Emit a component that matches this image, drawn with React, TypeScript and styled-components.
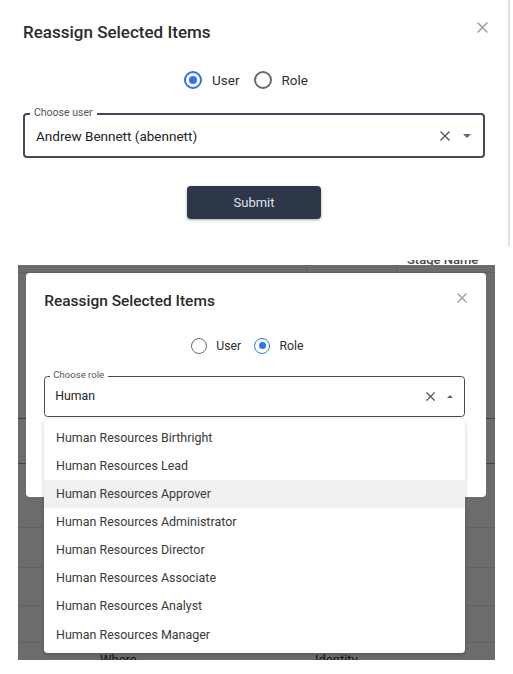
import React from 'react';
import styled, { createGlobalStyle } from 'styled-components';

const Global = createGlobalStyle`
  html, body { margin: 0; padding: 0; background: #ffffff; }
  body { font-family: Roboto, "Noto Sans", Arial, sans-serif; }
  * { box-sizing: border-box; }
`;

const ROLES = [
  'Human Resources Birthright',
  'Human Resources Lead',
  'Human Resources Approver',
  'Human Resources Administrator',
  'Human Resources Director',
  'Human Resources Associate',
  'Human Resources Analyst',
  'Human Resources Manager',
];

const Page = styled.div`
  width: 513px;
  height: 674px;
  overflow: hidden;
  display: flex;
  flex-direction: column;
  align-items: flex-start;
`;

const TopShot = styled.div`
  width: 510px;
  height: 247px;
  padding-left: 3px;
  border-right: 2px solid #e2e2e2;
  display: flex;
`;

const HeaderPeek = styled.div`
  margin-top: 13px;
  height: 5px;
  width: 100%;
  overflow: hidden;
  display: flex;
  align-items: flex-end;
  padding-left: 407px;
`;

const HeaderPeekText = styled.span`
  flex: none;
  font-size: 13px;
  line-height: 13px;
  margin-bottom: -1px;
  color: #4a4a4a;
  font-weight: 500;
`;

const Backdrop = styled.div`
  position: relative;
  margin-left: 18px;
  width: 477px;
  height: 395px;
  overflow: hidden;
  background: #f6f6f6;
`;

const BgTable = styled.div`
  display: flex;
  flex-direction: column;
`;

const BgRow = styled.div<{ $h: number; $blue?: boolean; $textTop?: number }>`
  height: ${(p) => p.$h}px;
  flex: none;
  border-bottom: 1px solid ${(p) => (p.$blue ? '#7f9ccc' : '#dcdcdc')};
  display: grid;
  grid-template-columns: 74px 215px 90px 1fr;
  padding-top: ${(p) => p.$textTop ?? 0}px;
  font-size: 13px;
  line-height: 15px;
  color: #333;
`;

const BgCell = styled.div<{ $divider?: boolean }>`
  border-right: ${(p) => (p.$divider ? '1px solid #d6d6d6' : 'none')};
  padding: 0 8px;
  white-space: nowrap;
  overflow: hidden;
`;

const BgLink = styled.span`
  color: #2a5db0;
`;

const Overlay = styled.div`
  position: absolute;
  inset: 0;
  background: rgba(0, 0, 0, 0.56);
`;

const DialogSpot = styled.div`
  position: absolute;
  left: 8px;
  top: 8px;
`;

const Zoomed = styled.div`
  zoom: 0.91;
`;

const DialogBox = styled.div`
  width: 505px;
  height: 246px;
  background: #ffffff;
  border-radius: 4px;
  display: flex;
  flex-direction: column;
  padding: 20px 23px 0 20px;
`;

const TitleRow = styled.div`
  display: flex;
  justify-content: space-between;
  align-items: flex-start;
  height: 24px;
`;

const Title = styled.h2`
  margin: 0;
  font-size: 17px;
  line-height: 24px;
  font-weight: 500;
  color: #2b2b2b;
`;

const CloseButton = styled.button`
  border: 0;
  background: none;
  padding: 0;
  margin: 2px -3px 0 0;
  width: 11px;
  height: 11px;
  display: flex;
  cursor: pointer;
`;

const RadioGroup = styled.div`
  margin-top: 24px;
  height: 24px;
  display: flex;
  justify-content: center;
  align-items: center;
  gap: 14px;
  padding-right: 16px;
`;

const RadioOption = styled.label`
  display: flex;
  align-items: center;
  gap: 10px;
  cursor: pointer;
`;

const RadioRing = styled.span<{ $checked: boolean }>`
  width: 18px;
  height: 18px;
  border-radius: 50%;
  border: 2px solid ${(p) => (p.$checked ? '#2f72ea' : '#6a6a6a')};
  display: flex;
  align-items: center;
  justify-content: center;
  &::after {
    content: '';
    width: 8px;
    height: 8px;
    border-radius: 50%;
    background: ${(p) => (p.$checked ? '#2f72ea' : 'transparent')};
  }
`;

const RadioLabel = styled.span`
  font-size: 13.5px;
  color: #2e2e2e;
`;

const Field = styled.div`
  position: relative;
  margin-top: 21px;
  height: 45px;
  border: 2px solid #444b58;
  border-radius: 4px;
  display: flex;
  align-items: center;
  padding: 0 12px 0 11px;
`;

const FieldLabel = styled.span`
  position: absolute;
  top: -8px;
  left: 5px;
  padding: 0 4px;
  background: #ffffff;
  font-size: 10.5px;
  line-height: 12px;
  color: #555;
`;

const FieldValue = styled.span`
  flex: 1;
  font-size: 13.5px;
  color: #222;
`;

const FieldIcons = styled.div`
  display: flex;
  align-items: center;
  gap: 13px;
`;

const Arrow = styled.span<{ $open: boolean }>`
  width: 0;
  height: 0;
  border-left: 4px solid transparent;
  border-right: 4px solid transparent;
  ${(p) => (p.$open ? 'border-bottom: 4px solid #666;' : 'border-top: 4px solid #666;')}
`;

const Menu = styled.ul`
  position: absolute;
  top: calc(100% + 3.5px);
  left: -1px;
  right: -2px;
  margin: 0;
  padding: 5.5px 0;
  list-style: none;
  background: #ffffff;
  border-radius: 4px;
  box-shadow: 0 2px 5px rgba(0, 0, 0, 0.2);
`;

const MenuItem = styled.li<{ $active?: boolean }>`
  height: 30.8px;
  display: flex;
  align-items: center;
  padding-left: 13px;
  font-size: 13.7px;
  color: #3a3a3a;
  background: ${(p) => (p.$active ? '#f1f1f1' : 'transparent')};
`;

const SubmitButton = styled.button`
  align-self: center;
  margin-top: 28px;
  width: 134px;
  height: 33px;
  border: 0;
  border-radius: 4px;
  background: #2d3748;
  color: #dfe2e8;
  font-family: Roboto, Arial, sans-serif;
  font-size: 13px;
  font-weight: 400;
  box-shadow: 0 1px 3px rgba(0, 0, 0, 0.35);
  cursor: pointer;
`;

const CloseIcon = ({ size, color, width }: { size: number; color: string; width: number }) => (
  <svg width={size} height={size} viewBox="0 0 10 10" fill="none">
    <path d="M0.5 0.5L9.5 9.5M9.5 0.5L0.5 9.5" stroke={color} strokeWidth={width} />
  </svg>
);

function ReassignDialog({ mode, value, open }: { mode: 'user' | 'role'; value: string; open: boolean }) {
  return (
    <DialogBox>
      <TitleRow>
        <Title>Reassign Selected Items</Title>
        <CloseButton aria-label="close">
          <CloseIcon size={11} color="#9c9c9c" width={1.3} />
        </CloseButton>
      </TitleRow>
      <RadioGroup>
        <RadioOption>
          <RadioRing $checked={mode === 'user'} />
          <RadioLabel>User</RadioLabel>
        </RadioOption>
        <RadioOption>
          <RadioRing $checked={mode === 'role'} />
          <RadioLabel>Role</RadioLabel>
        </RadioOption>
      </RadioGroup>
      <Field>
        <FieldLabel>{mode === 'user' ? 'Choose user' : 'Choose role'}</FieldLabel>
        <FieldValue>{value}</FieldValue>
        <FieldIcons>
          <CloseIcon size={10} color="#555" width={1.4} />
          <Arrow $open={open} />
        </FieldIcons>
        {open && (
          <Menu>
            {ROLES.map((r, i) => (
              <MenuItem key={r} $active={i === 2}>
                {r}
              </MenuItem>
            ))}
          </Menu>
        )}
      </Field>
      <SubmitButton>Submit</SubmitButton>
    </DialogBox>
  );
}

const ROWS: { h: number; blue?: boolean; textTop?: number; cells: React.ReactNode[] }[] = [
  { h: 8, cells: ['', '', '', ''] },
  { h: 146, blue: true, cells: ['', '', '', ''] },
  { h: 45, blue: true, cells: [<BgLink key="l">Role</BgLink>, '', '', ''] },
  { h: 64, cells: ['', '', '', ''] },
  { h: 40, cells: ['', '', '', ''] },
  { h: 38, cells: ['', '', '', ''] },
  { h: 37, cells: ['', '', '', ''] },
  { h: 30, textTop: 9, cells: ['', 'Where', 'Identity', ''] },
];

export default function App() {
  return (
    <Page>
      <Global />
      <TopShot>
        <ReassignDialog mode="user" value="Andrew Bennett (abennett)" open={false} />
      </TopShot>
      <HeaderPeek>
        <HeaderPeekText>Stage Name</HeaderPeekText>
      </HeaderPeek>
      <Backdrop>
        <BgTable>
          {ROWS.map((row, i) => (
            <BgRow key={i} $h={row.h} $blue={row.blue} $textTop={row.textTop}>
              {row.cells.map((c, j) => (
                <BgCell key={j} $divider={i === 0 && (j === 1 || j === 2)}>
                  {c}
                </BgCell>
              ))}
            </BgRow>
          ))}
        </BgTable>
        <Overlay />
        <DialogSpot>
          <Zoomed>
            <ReassignDialog mode="role" value="Human" open />
          </Zoomed>
        </DialogSpot>
      </Backdrop>
    </Page>
  );
}
